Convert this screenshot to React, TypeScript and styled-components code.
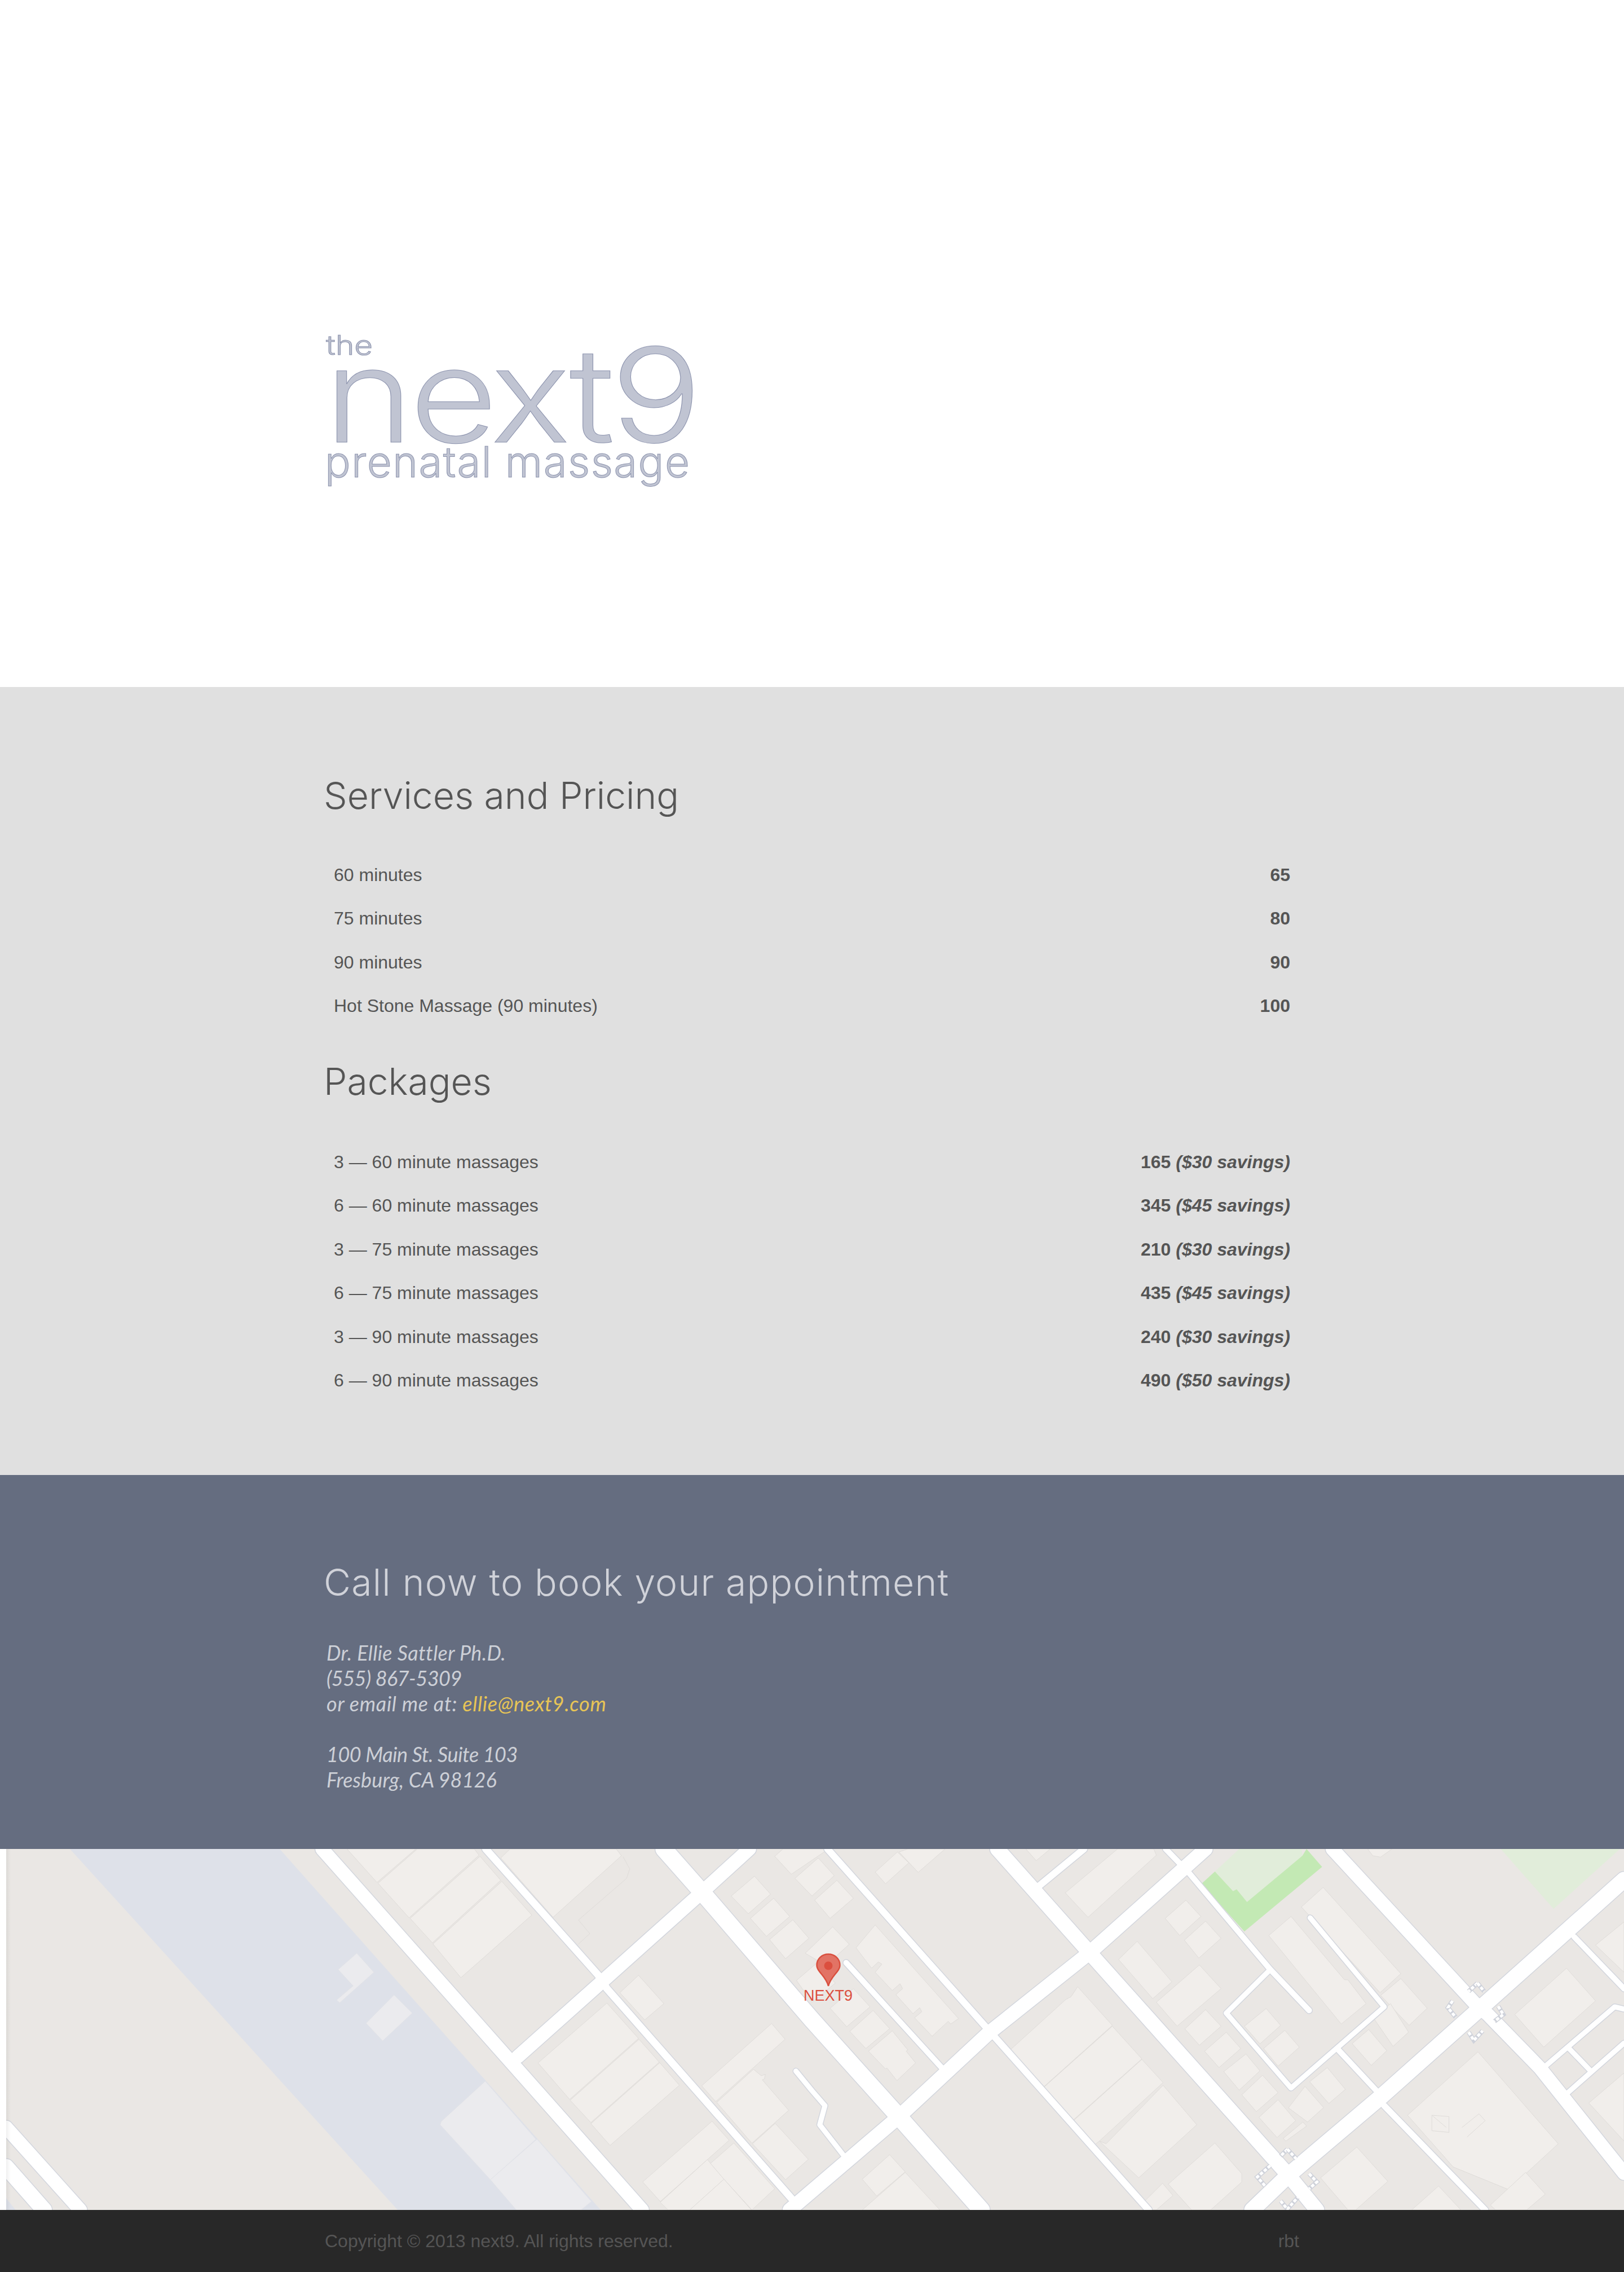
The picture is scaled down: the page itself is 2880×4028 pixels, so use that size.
import React from 'react';
import styled, { createGlobalStyle } from 'styled-components';

const GlobalStyle = createGlobalStyle`
  html, body {
    margin: 0;
    padding: 0;
    background: #fff;
  }
`;

const Page = styled.div`
  width: 2880px;
  font-family: 'Liberation Sans', Arial, sans-serif;
`;

const Container = styled.div`
  width: 1730px;
  margin-left: 574px;
`;

const Hero = styled.header`
  height: 1218px;
  padding-top: 587px;
  box-sizing: border-box;
`;

const Logo = styled.div`
  color: #c0c4d2;
  font-family: Inter, 'Liberation Sans', sans-serif;
  -webkit-text-stroke: 1px rgba(74, 86, 128, 0.55);
`;

const LogoThe = styled.div`
  font-size: 48px;
  line-height: 50px;
  font-weight: 300;
  margin-left: 4px;
  transform: scaleX(1.18);
  transform-origin: left center;
`;

const LogoName = styled.div`
  font-size: 232px;
  line-height: 125px;
  font-weight: 350;
  margin-left: 1px;
  letter-spacing: -6px;
  white-space: nowrap;
  transform: scaleX(1.16);
  transform-origin: left center;
`;

const LogoTag = styled.div`
  font-size: 76px;
  line-height: 113px;
  font-weight: 300;
  margin-left: 2px;
  letter-spacing: 1.5px;
  white-space: nowrap;
`;

const Services = styled.section`
  background: #e0e0e0;
  height: 1397px;
  padding-top: 156px;
  box-sizing: border-box;
`;

const Heading = styled.h2<{ $light?: boolean }>`
  margin: 0;
  font-family: Inter, 'Liberation Sans', sans-serif;
  font-weight: 300;
  font-size: 66px;
  line-height: 72px;
  letter-spacing: ${(p) => (p.$light ? '1.2px' : '0')};
  color: ${(p) => (p.$light ? '#d0d2d9' : '#555')};
  white-space: nowrap;
`;

const PriceList = styled.div<{ $top: number; $bottom: number }>`
  margin-top: ${(p) => p.$top}px;
  margin-bottom: ${(p) => p.$bottom}px;
`;

const PriceRow = styled.div`
  display: flex;
  justify-content: space-between;
  align-items: center;
  height: 77.5px;
  padding: 0 16px 0 18px;
  font-size: 32px;
  color: #555;
`;

const Price = styled.span`
  font-weight: 700;
`;

const Savings = styled.em`
  font-style: italic;
`;

const Contact = styled.section`
  background: #656d80;
  height: 663px;
  padding-top: 154px;
  box-sizing: border-box;
`;

const ContactBody = styled.div`
  margin-top: 67px;
  margin-left: 5px;
  font-family: Lato, 'Open Sans', sans-serif;
  font-style: italic;
  font-weight: 400;
  font-size: 36px;
  line-height: 45px;
  color: #cdd0d7;
`;

const ContactLine = styled.div<{ $spacing?: number }>`
  height: 45px;
  letter-spacing: ${(p) => p.$spacing ?? 0}px;
`;

const AddressBlock = styled.div`
  margin-top: 45px;
`;

const Email = styled.a`
  color: #e8c556;
  text-decoration: none;
`;

const MapFrame = styled.section`
  position: relative;
  height: 640px;
  padding-left: 11px;
  overflow: hidden;
  &::after {
    content: '';
    position: absolute;
    left: 11px;
    top: 0;
    bottom: 0;
    width: 8px;
    background: linear-gradient(to right, rgba(0, 0, 0, 0.06), rgba(0, 0, 0, 0));
  }
`;

const MapCanvas = styled.svg`
  display: block;
  width: 2869px;
  height: 640px;
`;

const Block = styled.polygon`
  fill: #f1eeeb;
  stroke: #dfdcd9;
  stroke-width: 1px;
  vector-effect: non-scaling-stroke;
`;

const IslandShape = styled.polygon`
  fill: #ebebee;
  stroke: #e2e3e8;
  stroke-width: 1px;
  vector-effect: non-scaling-stroke;
`;

const Road = styled.polyline<{ $width: number; $casing?: boolean }>`
  fill: none;
  stroke: ${(p) => (p.$casing ? '#d3d6dd' : '#fff')};
  stroke-width: ${(p) => (p.$casing ? p.$width + 3 : p.$width)}px;
  stroke-linejoin: round;
  stroke-linecap: round;
  vector-effect: non-scaling-stroke;
`;

const Crossing = styled.polyline<{ $inner?: boolean }>`
  fill: none;
  stroke: ${(p) => (p.$inner ? '#fff' : '#cfd2da')};
  stroke-width: ${(p) => (p.$inner ? 5 : 8)}px;
  stroke-dasharray: ${(p) => (p.$inner ? '6 3' : 'none')};
  vector-effect: non-scaling-stroke;
`;

const Contour = styled.polyline`
  fill: none;
  stroke: #dfdcd9;
  stroke-width: 1px;
  vector-effect: non-scaling-stroke;
`;

const Pin = styled.div`
  position: absolute;
  left: 1425px;
  top: 185px;
  width: 87px;
  display: flex;
  flex-direction: column;
  align-items: center;
  z-index: 1;
`;

const PinLabel = styled.span`
  font-size: 27px;
  line-height: 30px;
  color: #db4f3f;
  white-space: nowrap;
`;

const Footer = styled.footer`
  height: 110px;
  background: #282828;
  color: #555;
  font-size: 32px;
  display: flex;
  align-items: center;
`;

const FooterInner = styled(Container)`
  display: flex;
  justify-content: space-between;
  box-sizing: border-box;
  padding-left: 2px;
`;

const services = [
  ['60 minutes', '65'],
  ['75 minutes', '80'],
  ['90 minutes', '90'],
  ['Hot Stone Massage (90 minutes)', '100'],
];

const packages = [
  ['3 — 60 minute massages', '165', '($30 savings)'],
  ['6 — 60 minute massages', '345', '($45 savings)'],
  ['3 — 75 minute massages', '210', '($30 savings)'],
  ['6 — 75 minute massages', '435', '($45 savings)'],
  ['3 — 90 minute massages', '240', '($30 savings)'],
  ['6 — 90 minute massages', '490', '($50 savings)'],
];

// map data: the left and right halves are plotted in their own coordinates, the right one shifted by 1568
const leftBlocks = [
  '670,17 803,17 728,140', '730,143 806,17 916,17 925,40 790,270', '792,272 927,44 967,132 835,362',
  '836,366 969,136 1027,260 890,490', '967,50 985,17 1190,17 1200,42 1068,268',
  '1412,190 1457,117 1488,183 1445,255', '1449,272 1494,198 1525,265 1480,338',
  '1486,350 1531,277 1562,345 1517,420', '1496,44 1512,17 1600,17 1528,110',
  '1535,125 1580,50 1611,115 1568,190', '1197,545 1233,481 1282,585 1245,645',
  '1039,803 1172,583 1233,713 1100,937', '1101,940 1234,716 1273,800 1141,1022',
  '1141,1026 1274,802 1312,885 1178,1106', '1355,887 1490,658 1516,716 1382,945',
  '1384,948 1455,826 1470,850 1478,845 1476,862 1472,865 1523,977 1452,1098',
  '1241,1240 1375,1017 1408,1087 1275,1312', '1275,1315 1366,1158 1398,1230 1332,1343 1290,1343',
  '1372,1172 1417,1097 1496,1265 1452,1343 1398,1230', '1332,1343 1398,1230 1451,1343',
  '1453,1100 1497,1025 1561,1157 1517,1232',
];

const rightBlocks = [
  '5,205 48,132 80,198 35,272', '-13,400 40,303 72,367 27,445', '35,602 80,530 112,597 67,670',
  '-30,500 10,435 45,510 0,580', '73,687 118,610 150,677 104,750',
  '109,760 155,685 185,755 182,760 200,803 164,868 145,822 142,825',
  '85,380 122,296 283,640 268,660 263,650 232,705 198,637 212,615 208,600 195,622 162,552 175,530 170,512 155,537 122,470 135,440 128,432 115,455',
  '122,102 165,28 187,68 142,145', '168,28 185,17 257,17 205,103', '413,17 460,17 433,60',
  '489,178 590,17 660,17 665,40 533,268', '592,423 628,356 695,505 658,567', '665,580 748,443 790,530 705,668',
  '682,272 722,205 751,265 710,335', '719,352 760,282 790,345 747,418', '720,678 760,607 790,668 748,738',
  '758,760 800,690 828,750 786,820', '795,835 838,770 865,832 825,903', '830,920 870,848 900,912 858,982',
  '863,1003 900,938 934,1015 898,1077', '920,968 952,889 988,967 957,1020', '910,1080 948,1020 955,1035 915,1090',
  '835,668 877,603 905,665 865,733', '872,750 913,683 941,745 900,815',
  '882,335 925,265 1028,497 1035,498 1070,585 1022,660', '945,230 987,158 1137,475 1097,545',
  '1098,555 1137,493 1188,602 1153,665', '1085,640 1117,585 1152,690 1122,742', '1043,732 1075,680 1110,758 1080,812',
  '961,872 995,820 1030,900 998,952', '380,760 490,570 500,560 513,523 580,665 445,895',
  '445,897 580,668 637,788 502,1017', '502,1020 637,790 678,875 555,1090 545,1105',
  '555,1090 568,1100 678,885 743,1030 631,1225', '640,1315 677,1245 697,1290 665,1343 650,1343',
  '688,1248 778,1097 830,1210 830,1240 770,1343 733,1343', '982,1225 1052,1112 1112,1238 1050,1343 1035,1343',
  '1158,1343 1210,1255 1253,1343', '1357,625 1457,455 1513,575 1413,745',
  '1150,995 1286,762 1441,1100 1345,1268 1238,1185 1222,1150', '1310,1325 1378,1205 1416,1285 1380,1343 1320,1343',
  '1513,370 1568,285 1568,470', '1500,950 1568,840 1568,1090', '97,1230 150,1140 180,1203 125,1292',
  '97,1343 180,1205 247,1343', '1073,17 1120,17 1098,47 1083,42',
];

const leftRoads: [string, number][] = [
  ['622,17 1240,1343', 24],
  ['1000,780 1165,500 1350,185 1447,17', 24],
  ['12,1040 155,1343', 24],
  ['12,1185 85,1343', 28],
  ['938,17 1155,480 1172,530 1528,1300', 13],
  ['1282,17 1353,170 1568,645 1738,1005 1895,1343', 30],
];

const rightRoads: [string, number][] = [
  ['358,17 536,398 920,1215 975,1343', 26],
  ['760,17 536,398 340,695 168,1000 -43,1343', 25],
  ['30,17 340,680 650,1343', 12],
  ['66,435 255,830', 10],
  ['-31,833 0,905 25,960 15,1030 62,1145', 9],
  ['683,17 728,105 885,460 960,610', 10],
  ['437,155 525,17', 12],
  ['885,460 800,620 925,895 1105,597 962,270', 9],
  ['1014,750 1090,905', 10],
  ['1568,130 1280,620 1100,925 920,1215 850,1343', 28],
  ['1005,17 1278,580 1305,625 1405,820 1568,1208', 24],
  ['1105,960 1300,1343', 11],
  ['1472,340 1568,530', 10],
  ['1568,605 1550,597 1410,825', 9],
  ['1462,750 1505,835', 9],
  ['1568,730 1452,925', 9],
];

const crossings = [
  '1285,510 1268,540', '1285,510 1298,540', '1237,575 1228,600 1243,635', '1325,595 1335,625 1318,650',
  '1268,690 1278,720 1295,685', '918,1120 905,1145', '918,1120 935,1155', '885,1180 860,1222 875,1255',
  '960,1210 975,1240 960,1265', '905,1310 918,1340 938,1297',
];

const RoadLayer = ({ roads, casing }: { roads: [string, number][]; casing?: boolean }) => (
  <>
    {roads.map(([points, width]) => (
      <Road key={points} points={points} $width={width} $casing={casing} />
    ))}
  </>
);

const StreetMap = () => (
  <MapCanvas viewBox="12 17 3124 1326" preserveAspectRatio="none">
    <rect x="0" y="0" width="3200" height="1400" fill="#eae7e4" />
    <polygon points="135,17 540,17 1160,1343 768,1343" fill="#dee1e9" />
    <polygon points="12,1300 30,1343 12,1343" fill="#dee1e9" />
    <IslandShape points="937,870 852,1018 850,1030 947,1232 1035,1083" />
    <IslandShape points="1037,1083 947,1232 997,1343 1122,1343 1142,1312" />
    <IslandShape points="689,400 722,470 656,582 650,572 682,520 653,460" />
    <IslandShape points="761,553 796,620 739,722 707,657" />
    {leftBlocks.map((points) => (
      <Block key={points} points={points} />
    ))}
    <Contour points="1203,45 1216,90 1210,125 1117,278 1139,328 1116,368" />
    <g transform="translate(1568 0)">
      <polygon points="1330,17 1560,17 1432,237" fill="#e1edda" />
      <polygon points="778,100 825,17 945,17 947,42 840,212 820,165 813,172" fill="#e1edda" />
      <polygon points="752,145 778,100 813,172 820,165 840,212 947,42 955,17 985,83 835,320" fill="#c3e9b4" />
      {rightBlocks.map((points) => (
        <Block key={points} points={points} />
      ))}
      <Contour points="1197,995 1230,1000 1230,1058 1197,1052 1197,995 1225,1040" />
      <Contour points="1255,1040 1288,990 1300,1015 1265,1075" />
    </g>
    <RoadLayer roads={leftRoads} casing />
    <g transform="translate(1568 0)">
      <RoadLayer roads={rightRoads} casing />
    </g>
    <RoadLayer roads={leftRoads} />
    <g transform="translate(1568 0)">
      <RoadLayer roads={rightRoads} />
      {crossings.map((points) => (
        <React.Fragment key={points}>
          <Crossing points={points} />
          <Crossing points={points} $inner />
        </React.Fragment>
      ))}
    </g>
  </MapCanvas>
);

const MapPin = () => (
  <Pin>
    <svg width="44" height="60" viewBox="0 0 44 60">
      <path
        d="M22 58C19 46 12 40 6 32 3 28 1.500 25 1.500 21 1.500 10 10.500 1.500 22 1.500S42.500 10 42.500 21c0 4-1.500 7-4.500 11-6 8-13 14-16 26z"
        fill="#e27365"
        stroke="#d9503f"
        strokeWidth="2.500"
      />
      <circle cx="22" cy="22" r="7.500" fill="#db4f3f" />
    </svg>
    <PinLabel>NEXT9</PinLabel>
  </Pin>
);

export default function App() {
  return (
    <Page>
      <GlobalStyle />
      <Hero>
        <Container>
          <Logo>
            <LogoThe>the</LogoThe>
            <LogoName>next9</LogoName>
            <LogoTag>prenatal massage</LogoTag>
          </Logo>
        </Container>
      </Hero>
      <Services>
        <Container>
          <Heading>Services and Pricing</Heading>
          <PriceList $top={66.5} $bottom={58}>
            {services.map(([name, price]) => (
              <PriceRow key={name}>
                <span>{name}</span>
                <Price>{price}</Price>
              </PriceRow>
            ))}
          </PriceList>
          <Heading>Packages</Heading>
          <PriceList $top={69} $bottom={0}>
            {packages.map(([name, price, savings]) => (
              <PriceRow key={name}>
                <span>{name}</span>
                <Price>
                  {price} <Savings>{savings}</Savings>
                </Price>
              </PriceRow>
            ))}
          </PriceList>
        </Container>
      </Services>
      <Contact>
        <Container>
          <Heading $light>Call now to book your appointment</Heading>
          <ContactBody>
            <ContactLine $spacing={0.35}>Dr. Ellie Sattler Ph.D.</ContactLine>
            <ContactLine $spacing={-0.5}>(555) 867-5309</ContactLine>
            <ContactLine $spacing={0.7}>
              or email me at: <Email href="#">ellie@next9.com</Email>
            </ContactLine>
            <AddressBlock>
              <ContactLine $spacing={-0.45}>100 Main St. Suite 103</ContactLine>
              <ContactLine $spacing={0.1}>Fresburg, CA 98126</ContactLine>
            </AddressBlock>
          </ContactBody>
        </Container>
      </Contact>
      <MapFrame>
        <StreetMap />
        <MapPin />
      </MapFrame>
      <Footer>
        <FooterInner>
          <span>Copyright © 2013 next9. All rights reserved.</span>
          <span>rbt</span>
        </FooterInner>
      </Footer>
    </Page>
  );
}
